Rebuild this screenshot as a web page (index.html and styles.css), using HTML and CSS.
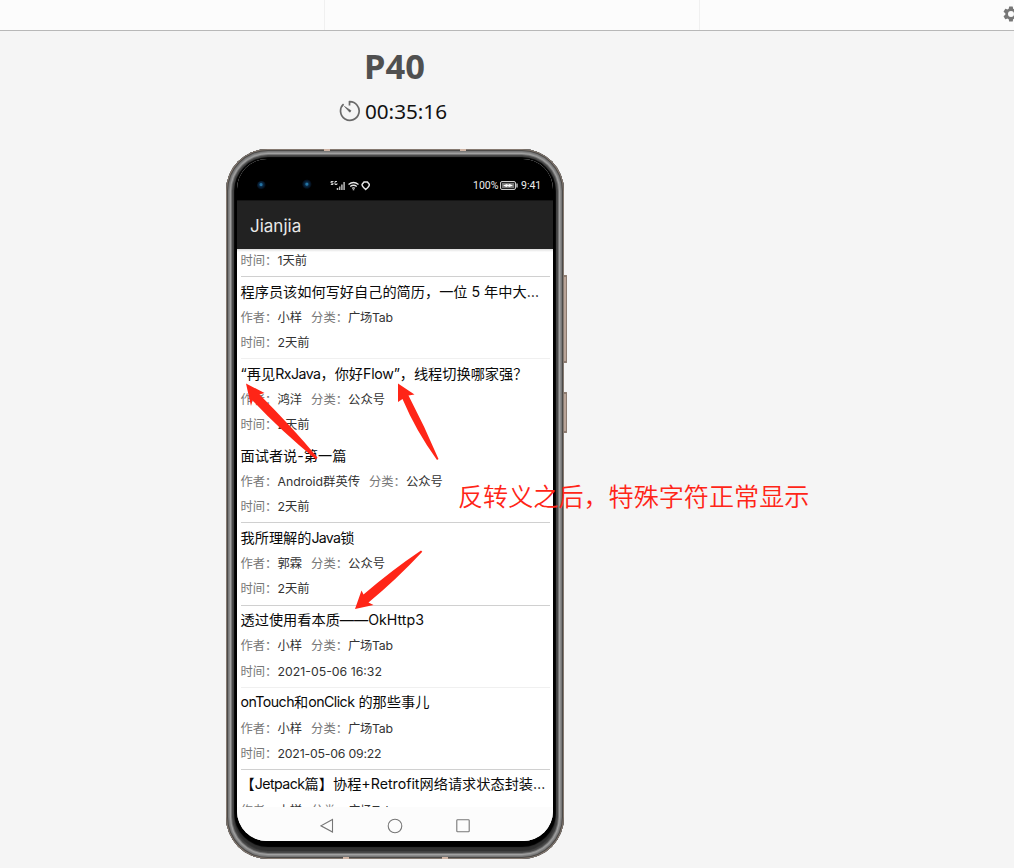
FILE: index.html
```html
<!DOCTYPE html>
<html lang="zh-CN">
<head>
<meta charset="utf-8">
<title>P40</title>
<link rel="stylesheet" href="styles.css">
</head>
<body>
<header class="topbar">
  <svg class="gear" width="18" height="18" viewBox="0 0 24 24"><path fill="#777" fill-rule="evenodd" d="M19.4 13a7.8 7.8 0 0 0 0-2l2.1-1.7a.5.5 0 0 0 .1-.6l-2-3.5a.5.5 0 0 0-.6-.2l-2.5 1a7.3 7.3 0 0 0-1.7-1L14.4 2.400a.5.5 0 0 0-.5-.4h-4a.5.5 0 0 0-.5.400L9 5a7.300 7.300 0 0 0-1.700 1l-2.500-1a.5.5 0 0 0-.6.2l-2 3.500a.5.5 0 0 0 .1.600L4.500 11a7.800 7.800 0 0 0 0 2l-2.200 1.700a.5.5 0 0 0-.1.600l2 3.500c.1.200.4.300.6.200l2.500-1a7.300 7.300 0 0 0 1.700 1l.4 2.600c0 .2.200.4.500.4h4c.3 0 .5-.2.500-.4l.4-2.600a7.300 7.300 0 0 0 1.700-1l2.500 1c.2.100.5 0 .6-.2l2-3.500a.5.5 0 0 0-.1-.6zM12 16a4 4 0 1 1 0-8 4 4 0 0 1 0 8z"/></svg>
</header>
<main class="stage">
  <h1 class="device-name">P40</h1>
  <div class="timer">
    <svg width="22" height="22" viewBox="0 0 22 22" fill="none" stroke="#6a6a6a" stroke-width="1.700"><path d="M10.500 5.500V1.700A9.300 9.300 0 1 1 4.600 4.100"/><path d="M5.500 6.500l6.500 4.200-1.200 1.500z" fill="#555" stroke-width=".8"/></svg>
    <span>00:35:16</span>
  </div>
  <section class="phone">
    <i class="key volume"></i><i class="key power"></i>
    <i class="seam s1"></i><i class="seam s2"></i><i class="seam s3"></i><i class="seam s4"></i>
    <div class="screen">
      <div class="status">
        <i class="lens small"></i><i class="lens"></i>
        <svg class="signals" width="44" height="12" viewBox="0 0 44 12" fill="none" stroke="#e6e6e6"><path stroke-width=".9" d="M3.500 1.500H1v1.500h2v1.500H.8M7 1.500H5v3h2V3.300"/><path stroke-width="1.500" d="M7.500 8v2M9.700 6.500v3.500M11.900 4.500v5.500M14.100 2V10" stroke="#bbb"/><path stroke-width="1.300" d="M18.500 4.500q5-4 10 0M20.200 6.500q3.300-2.500 6.600 0M22 8.300q1.500-1 3 0"/><path d="M23.500 9.200v1" stroke-width="1.500"/><path stroke-width="1.500" d="M34 2h3.400l1.900 2.300q.5 2-3.600 5.200q-4.100-3.200-3.600-5.200z"/></svg>
        <span class="percent">100%</span>
        <svg class="battery" width="18" height="9" viewBox="0 0 18 9"><rect x=".5" y=".5" width="15" height="8" rx="1.500" fill="#222" stroke="#ccc"/><rect x="2" y="2" width="12" height="5" fill="#777"/><path d="M3 4.500l4-1.500 1 1 1.500-1 3.500 1.500-4 1.500-1-1-1.500 1z" fill="#fff"/><path d="M17 2.500v4" stroke="#bbb" stroke-width="1.500"/></svg>
        <span class="clock">9:41</span>
      </div>
      <div class="appbar">Jianjia</div>
      <div class="list">
        <article class="item partial"><p class="meta"><b>时间：</b><span class="count">1天前</span></p></article>
        <article class="item"><h2>程序员该如何写好自己的简历，一位 5 年中大…</h2><p class="meta"><b>作者：</b><span>小样</span><b>分类：</b><span class="tab">广场Tab</span></p><p class="meta"><b>时间：</b><span class="count">2天前</span></p></article>
        <article class="item faint"><h2>“再见<em>RxJava</em>，你好<em class="snug">Flow”</em>，线程切换哪家强？</h2><p class="meta"><b>作者：</b><span>鸿洋</span><b>分类：</b><span>公众号</span></p><p class="meta"><b>时间：</b><span class="count">2天前</span></p></article>
        <article class="item none"><h2>面试者说-第一篇</h2><p class="meta"><b>作者：</b><span class="android">Android群英传</span><b>分类：</b><span>公众号</span></p><p class="meta"><b>时间：</b><span class="count">2天前</span></p></article>
        <article class="item"><h2>我所理解的<em class="tight">Java</em>锁</h2><p class="meta"><b>作者：</b><span>郭霖</span><b>分类：</b><span>公众号</span></p><p class="meta"><b>时间：</b><span class="count">2天前</span></p></article>
        <article class="item"><h2>透过使用看本质——OkHttp3</h2><p class="meta"><b>作者：</b><span>小样</span><b>分类：</b><span class="tab">广场Tab</span></p><p class="meta"><b>时间：</b><span class="date">2021-05-06 16:32</span></p></article>
        <article class="item faint"><h2><em>onTouch</em>和<em>onClick</em> 的那些事儿</h2><p class="meta"><b>作者：</b><span>小样</span><b>分类：</b><span class="tab">广场Tab</span></p><p class="meta"><b>时间：</b><span class="date late">2021-05-06 09:22</span></p></article>
        <article class="item"><h2>【<em>Jetpack</em>篇】协程<em class="plain">+Retrofit</em>网络请求状态封装…</h2><p class="meta"><b>作者：</b><span>小样</span><b>分类：</b><span class="tab">广场Tab</span></p></article>
      </div>
      <nav class="nav">
        <svg width="14" height="16" viewBox="0 0 14 16"><path d="M12.500 1.500v12.500L1 7.800z"/></svg>
        <svg width="16" height="16" viewBox="0 0 16 16"><circle cx="8" cy="8" r="6.800"/></svg>
        <svg width="14" height="14" viewBox="0 0 14 14"><rect x=".8" y=".8" width="12.400" height="12" rx=".8"/></svg>
      </nav>
    </div>
  </section>
</main>
<svg class="arrows" width="1014" height="868" viewBox="0 0 1014 868" fill="#ff2517">
  <path d="M246 383.500L264.500 393 259.500 394.500Q292 427 317.500 457.500L316 459.500Q280 430 252.500 400.500L251 406z"/>
  <path d="M398 383.500L414.500 394.500 408.500 395.500Q425 427 438.500 459L437 460Q416 431 402.500 399L398 402z"/>
  <path d="M355 609L361.500 590.500 363.500 594.500Q392 570 421 550.500L422.300 551.800Q396 580 368.500 602.500L373.500 605z"/>
</svg>
<p class="note">反转义之后，特殊字符正常显示</p>
</body>
</html>
```

FILE: styles.css
```css
* { box-sizing: border-box; }
body { margin: 0; width: 1014px; height: 868px; overflow: hidden; background: #f5f5f5; position: relative; font-family: "Noto Sans", "Noto Sans CJK SC", sans-serif; }
h1, h2, p { margin: 0; }
.topbar { height: 31px; background: linear-gradient(90deg, transparent 324px, #f0f0f0 324px 325px, transparent 325px 699px, #f0f0f0 699px 700px, transparent 700px) #fcfcfc; border-bottom: 1px solid #b8b8b8; padding: 5px 0 0 1002px; }
.gear { display: block; }
.stage { width: 790px; display: flex; flex-direction: column; align-items: center; }
.device-name { height: 70px; line-height: 69px; padding-right: 1px; font-size: 34.500px; font-weight: 700; color: #505050; }
.timer { height: 48px; display: flex; justify-content: center; gap: 4px; padding: 0 4px 0 0; font-size: 20.700px; line-height: 20px; color: #111; }
.timer svg { margin-top: -1px; }
.phone { position: relative; width: 338px; height: 710px; padding: 10px 11px 18px 11px; background: #000; border-radius: 42px;
  box-shadow: inset 0 0 0 1px #857970, inset 0 0 0 2px #4c4a48, inset 0 0 0 3px #777, inset 0 0 1px 4px #888, inset 0 0 1px 5px #aaa, inset 0 0 1px 6px #777, inset 0 0 1px 8px #444, inset 0 -4px 1px 8px #303030; }
.key { position: absolute; left: 338px; width: 3px; background: #b9a498; border: solid #8c7b70; border-width: 2px 1px 2px 0; border-radius: 0 1px 1px 0; }
.volume { top: 126px; height: 88px; }
.power { top: 243px; height: 41px; }
.seam { position: absolute; width: 6px; height: 2px; background: #d0b5a5; }
.s1 { left: 98px; top: 0; }
.s2 { left: 234px; top: 0; }
.s3 { left: 117px; bottom: 0; }
.s4 { left: 216px; bottom: 0; }
.screen { width: 316px; height: 682px; border-radius: 30px; overflow: hidden; background: #fff; display: flex; flex-direction: column; }
.status { height: 41px; background: #000; display: flex; align-items: center; padding: 12px 0 0 20px; color: #eee; font: 10.500px/12px Roboto, sans-serif; }
.lens { width: 9px; height: 9px; border-radius: 50%; background: radial-gradient(circle at 45% 40%, #2474a4 0 1px, #0a2b48 2px, #04101e 4px, #000 5px); margin-right: 35px; flex: none; }
.lens + .lens { width: 13px; height: 13px; margin-right: 16px; }
.signals { margin-right: 99px; flex: none; }
.percent { width: 27px; flex: none; }
.battery { margin-right: 3px; flex: none; }
.appbar { height: 49px; flex: none; background: #222; color: #e8e8e8; padding-left: 13px; font: 17px/51px Inter, sans-serif; border-top: 1px solid #151515; }
.list { height: 558px; flex: none; overflow: hidden; padding: 0 3px 0 3.500px; background: linear-gradient(#ddd, #fff 3px); }
.item { height: 82.150px; border-top: 1px solid #d0d0d0; padding-top: .5px; font-family: Inter, "Noto Sans CJK SC", sans-serif; }
.item.faint { border-color: #f0f0f0; }
.item.none { border-color: transparent; }
.item.partial { height: 27px; border: 0; padding-top: 0; }
.item h2 { height: 27.300px; font-size: 14.200px; line-height: 27px; font-weight: 400; color: #0a0a0a; white-space: nowrap; }
.item em { font-style: normal; letter-spacing: -.55px; }
.item em.snug { letter-spacing: -.25px; }
.item em.tight { letter-spacing: -.75px; }
.item em.plain { letter-spacing: 0; }
.meta { height: 25.200px; line-height: 25px; font-size: 12.300px; color: #333; white-space: nowrap; }
.meta b { font-weight: 400; color: #777; display: inline-block; width: 37px; }
.meta span + b { margin-left: 9px; }
.tab { letter-spacing: -.3px; }
.date.late { letter-spacing: -.2px; }
.partial .meta { line-height: 23px; }
.nav { flex: 1; background: #fcfcfc; display: flex; align-items: center; padding: 3px 0 0 83px; }
.nav svg { fill: none; stroke: #777; stroke-width: 1.100; }
.nav svg:nth-child(2) { margin-left: 53px; margin-right: 53px; }
.arrows { position: absolute; left: 0; top: 0; }
.note { position: absolute; left: 458px; top: 477px; font: 25.100px/37px "Noto Sans CJK SC", sans-serif; font-weight: 350; color: #ff2517; white-space: nowrap; }
```
